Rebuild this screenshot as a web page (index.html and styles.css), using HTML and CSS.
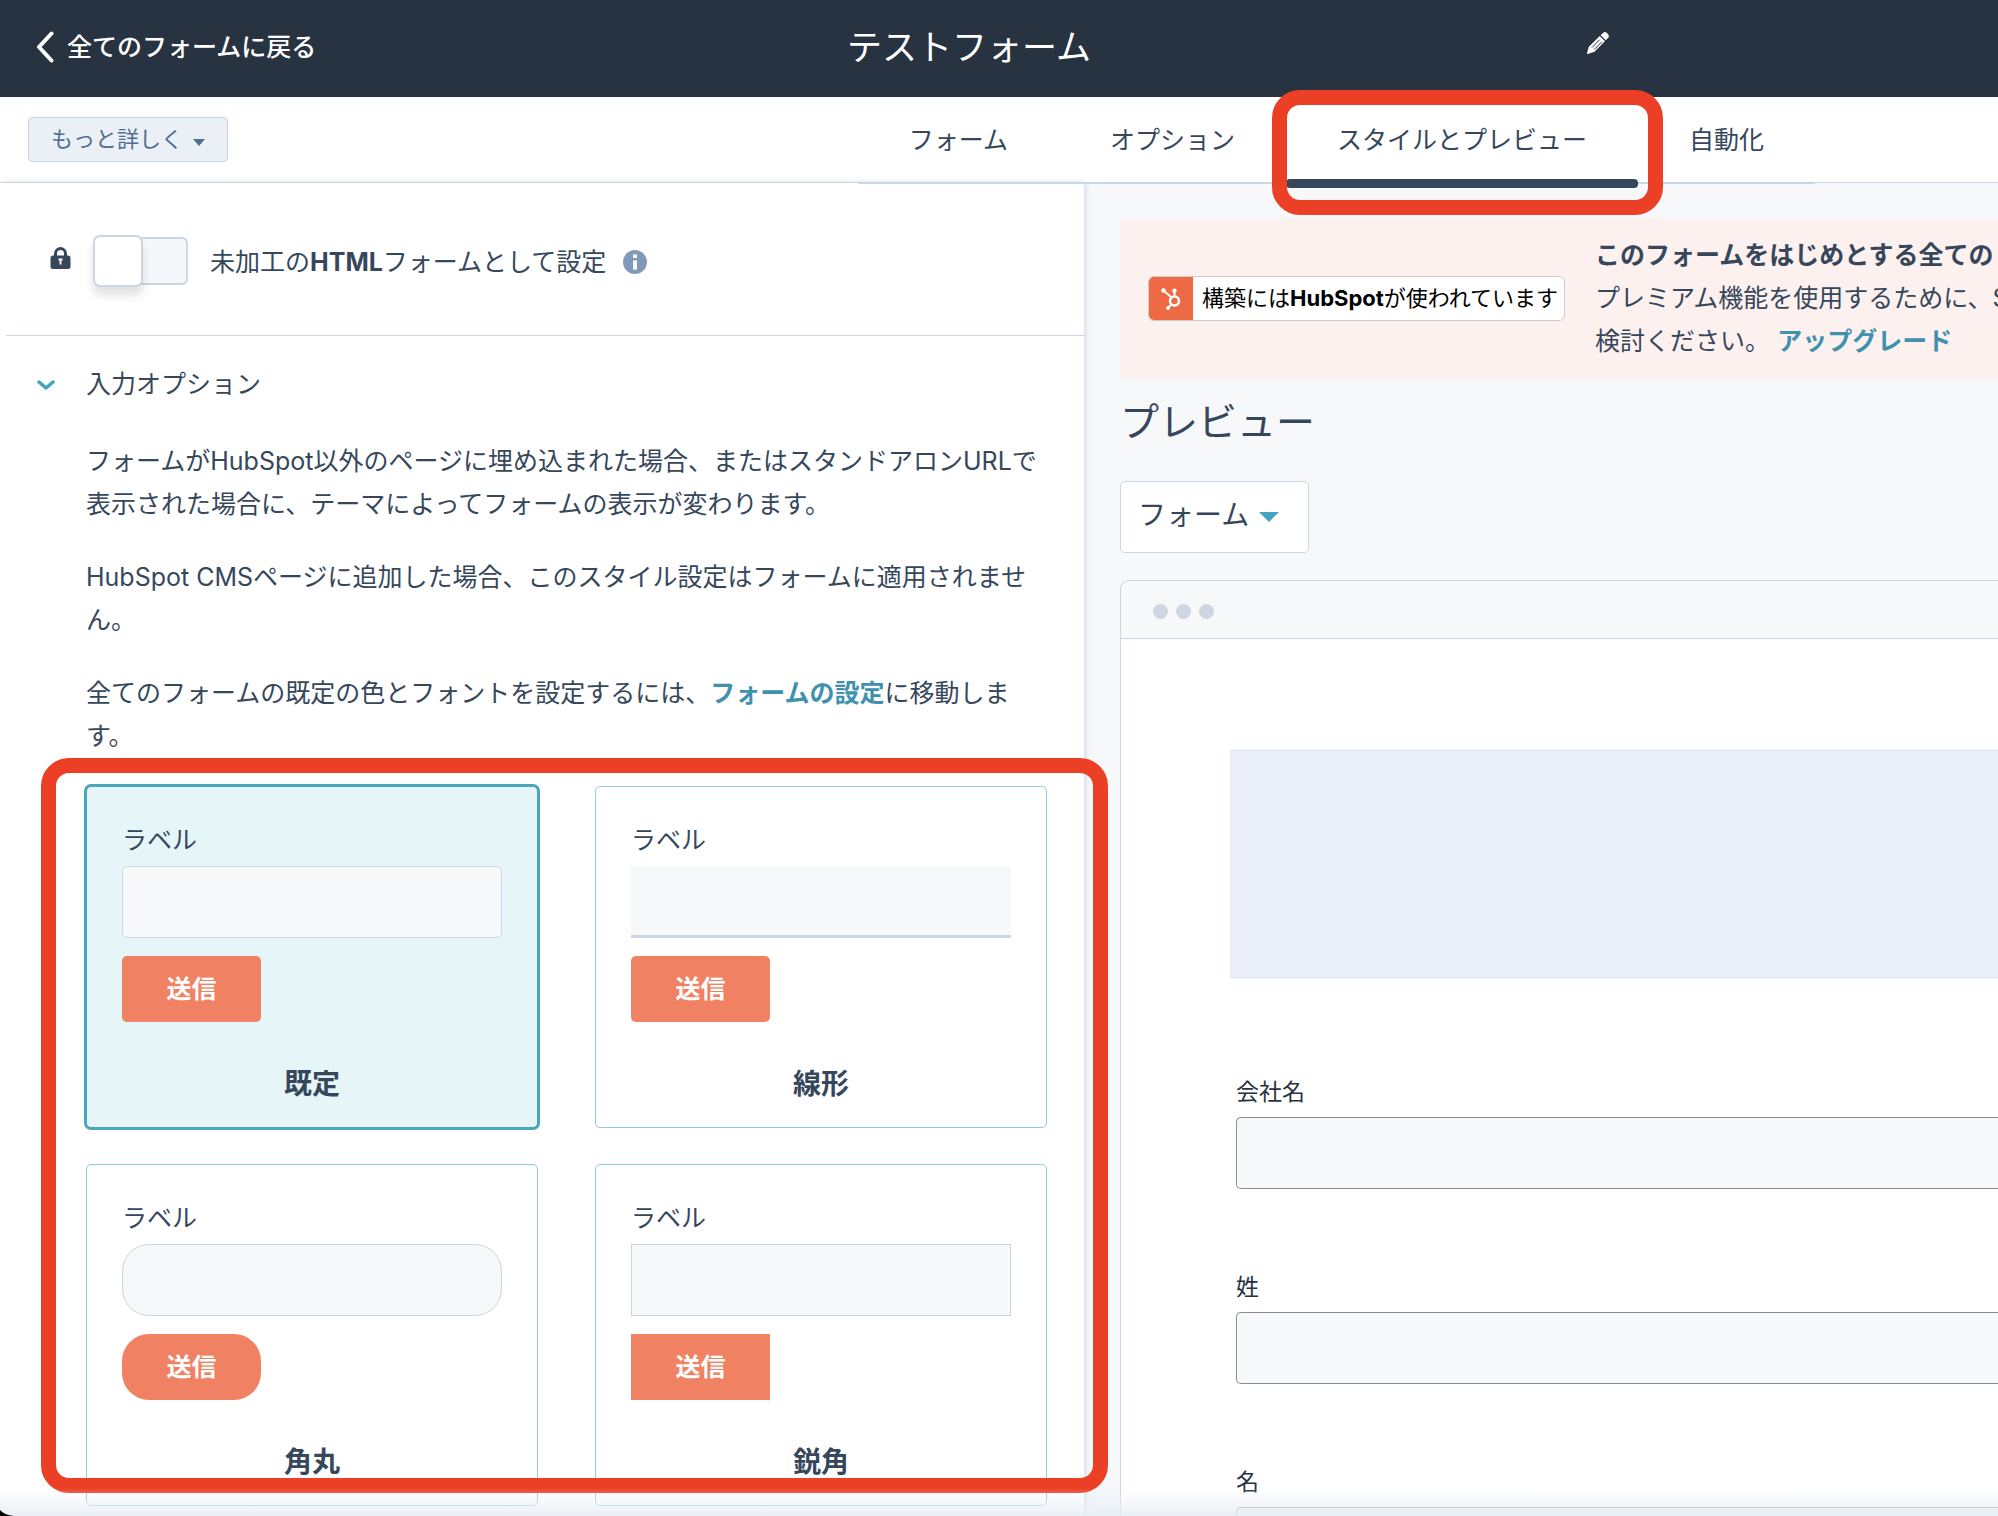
FILE: index.html
```html
<!DOCTYPE html>
<html lang="ja">
<head>
<meta charset="utf-8">
<meta name="viewport" content="width=device-width, initial-scale=1">
<title>テストフォーム</title>
<link rel="stylesheet" href="styles.css">
</head>
<body>
<div class="app">
  <header class="topbar">
    <a class="back" href="#">
      <svg class="back-icon" viewBox="0 0 18 32" aria-hidden="true"><path d="M15.5 2.5 3 16l12.500 13.500" fill="none" stroke="currentColor" stroke-width="4" stroke-linecap="round" stroke-linejoin="round"/></svg>
      <span>全てのフォームに戻る</span>
    </a>
    <div class="title-edit">
      <h1 class="title">テストフォーム</h1>
      <button class="edit" type="button" aria-label="名前を編集">
        <svg viewBox="0 0 22 22" aria-hidden="true">
          <path d="M13.500 3.200 16 .9Q18-.8 20 1L21 2.200Q22.800 4.200 21 6L18.800 8.200Z" fill="currentColor"/>
          <path d="M12.800 3.900 18.100 8.900 7.500 19.800.8 21.900Q0 22 0 21.300L1.800 14.800Z" fill="currentColor"/>
          <path d="M13 3.700 18.400 8.800M5 15.500 12.600 7.700M7.200 17.500 14.800 9.800" stroke="#273341" stroke-width="1"/>
        </svg>
      </button>
    </div>
  </header>

  <div class="subbar">
    <button class="more" type="button">もっと詳しく
      <svg viewBox="0 0 12 7" aria-hidden="true"><path d="M0 0h12L6 7z" fill="currentColor"/></svg>
    </button>
    <nav class="tabs">
      <a class="tab" href="#">フォーム</a>
      <a class="tab" href="#">オプション</a>
      <a class="tab tab-active" href="#" aria-current="page">スタイルとプレビュー<span class="mark mark-tab"></span></a>
      <a class="tab" href="#">自動化</a>
    </nav>
  </div>

  <main class="main">
    <section class="settings">
      <div class="raw">
        <svg class="lock" viewBox="0 0 20 22" aria-hidden="true">
          <path d="M5 10V6.500a5 5 0 0 1 10 0V10" fill="none" stroke="currentColor" stroke-width="3"/>
          <rect y="8.500" width="20" height="13.500" rx="2.500" fill="currentColor"/>
          <path d="M8 12.500h4M10 12.500v5" stroke="#fff" stroke-width="1.800"/>
        </svg>
        <input class="toggle" type="checkbox" id="raw-html">
        <label for="raw-html">未加工の<b>HTML</b>フォームとして設定</label>
        <svg class="info" viewBox="0 0 24 24" role="img" aria-label="情報"><circle cx="12" cy="12" r="12" fill="#8199b9"/><path d="M10 4.500h4v3.500h-4zM10 10.500h4v9h-4z" fill="#fff"/></svg>
      </div>

      <div class="options">
        <h2 class="options-head">
          <svg viewBox="0 0 18 10" aria-hidden="true"><path d="M2 2l7 6 7-6" fill="none" stroke="#46a3bd" stroke-width="3.500" stroke-linecap="round" stroke-linejoin="round"/></svg>
          <span>入力オプション</span>
        </h2>
        <div class="options-body">
          <p>フォームがHubSpot以外のページに埋め込まれた場合、またはスタンドアロンURLで表示された場合に、テーマによってフォームの表示が変わります。</p>
          <p>HubSpot CMSページに追加した場合、このスタイル設定はフォームに適用されません。</p>
          <p>全てのフォームの既定の色とフォントを設定するには、<a class="link" href="#">フォームの設定</a>に移動します。</p>

          <div class="cards">
            <div class="card card-selected">
              <label for="s1">ラベル</label>
              <input class="sample" id="s1" type="text">
              <button class="send" type="button">送信</button>
              <h3>既定</h3>
            </div>
            <div class="card card-linear">
              <label for="s2">ラベル</label>
              <input class="sample" id="s2" type="text">
              <button class="send" type="button">送信</button>
              <h3>線形</h3>
            </div>
            <div class="card card-round">
              <label for="s3">ラベル</label>
              <input class="sample" id="s3" type="text">
              <button class="send" type="button">送信</button>
              <h3>角丸</h3>
            </div>
            <div class="card card-sharp">
              <label for="s4">ラベル</label>
              <input class="sample" id="s4" type="text">
              <button class="send" type="button">送信</button>
              <h3>鋭角</h3>
            </div>
            <span class="mark mark-cards"></span>
          </div>
        </div>
      </div>
    </section>

    <section class="preview">
      <div class="banner">
        <div class="badge">
          <span class="badge-logo">
            <svg viewBox="0 0 20 22" aria-hidden="true">
              <g fill="none" stroke="#fff" stroke-width="2"><circle cx="13.500" cy="13" r="4.500" stroke-width="2.600"/><path d="M13.500 8.500V3M10.500 9.500 2.500 2.500M10.300 16.500 7 20"/></g>
              <g fill="#fff"><circle cx="2.500" cy="2.500" r="2.300"/><circle cx="13.500" cy="2.800" r="2.200"/><circle cx="7" cy="20" r="1.900"/></g>
            </svg>
          </span>
          <span class="badge-text">構築には<b>HubSpot</b>が使われています</span>
        </div>
        <p class="banner-text"><b>このフォームをはじめとする全ての</b><br>プレミアム機能を使用するために、S<br>検討ください。 <a class="link" href="#">アップグレード</a></p>
      </div>

      <h2 class="preview-title">プレビュー</h2>
      <div class="picker">
        <select aria-label="プレビューの対象"><option>フォーム</option></select>
        <svg viewBox="0 0 20 10" aria-hidden="true"><path d="M0 0h20L10 10z" fill="#46a3bd"/></svg>
      </div>

      <div class="frame">
        <div class="frame-bar"><i></i><i></i><i></i></div>
        <div class="frame-body">
          <div class="placeholder"></div>
          <form class="form">
            <div class="field"><label for="company">会社名</label><input id="company" type="text"></div>
            <div class="field"><label for="last">姓</label><input id="last" type="text"></div>
            <div class="field"><label for="first">名</label><input id="first" type="text"></div>
          </form>
        </div>
      </div>
    </section>
  </main>
  <div class="fade"></div>
  <svg class="corner" viewBox="0 0 14 6" aria-hidden="true"><path d="M0 0Q4 5 14 6H0Z"/></svg>
</div>
</body>
</html>
```
FILE: styles.css
```css
*, ::before, ::after { box-sizing: border-box; }

body {
  margin: 0;
  font-family: Inter, "Noto Sans CJK JP", sans-serif;
  font-size: 25px;
  line-height: 43px;
  color: #36475b;
  background: #fff;
}

h1, h2, h3, p { margin: 0; font-weight: 400; }
a { color: inherit; text-decoration: none; }
button, input, select { font: inherit; color: inherit; margin: 0; }
svg { display: block; flex: none; }
.link { color: #3f91ae; font-weight: 700; }

.app {
  position: relative;
  display: flex;
  flex-direction: column;
  height: 100vh;
  overflow: hidden;
}

/* Top bar */
.topbar {
  display: grid;
  grid-template-columns: 847fr 762fr 389fr;
  align-items: center;
  flex: none;
  height: 97px;
  padding-bottom: 3px;
  background: #273341;
  color: #fff;
}
.back { display: flex; align-items: center; gap: 13px; padding-left: 36px; font-weight: 500; }
.back-icon { width: 18px; height: 32px; }
.title-edit { display: flex; align-items: center; justify-content: space-between; }
.title { font-size: 35px; }
.edit { padding: 0 0 8px; border: 0; background: none; color: #fff; }
.edit svg { width: 22px; height: 22px; }

/* Tab bar */
.subbar {
  position: relative;
  z-index: 3;
  display: flex;
  align-items: center;
  justify-content: space-between;
  flex: none;
  height: 86px;
  padding: 0 183px 0 28px;
  border-bottom: 1px solid #cbd6e2;
}
.more {
  display: flex;
  align-items: center;
  gap: 10px;
  height: 45px;
  padding: 0 22px;
  border: 1px solid #cbd6e2;
  border-radius: 4px;
  background: #eaf0f6;
  color: #506e91;
  font-size: 22px;
}
.more svg { width: 12px; height: 7px; margin-top: 6px; }
.tabs { display: flex; align-self: flex-start; height: 87px; border-bottom: 2px solid #cbd6e2; }
.tab { position: relative; padding: 22px 51px 20px; }
.tab-active::after {
  content: "";
  position: absolute;
  left: 0;
  right: 0;
  bottom: -6px;
  height: 9px;
  border-radius: 4px;
  background: #36475b;
}

/* Red highlight frames */
.mark { position: absolute; z-index: 4; border: 15px solid #ec4026; border-radius: 28px; pointer-events: none; }
.mark-tab { inset: -7px -25px -33px -14px; }
.mark-cards { inset: -28px -61px 13px -45px; }

.main { display: grid; grid-template-columns: 1084fr 914fr; flex: 1; min-height: 0; }

/* Settings panel */
.settings { position: relative; z-index: 2; min-width: 0; background: #fff; box-shadow: 1px 0 6px #cbd6e2; }
.raw {
  display: flex;
  align-items: center;
  height: 153px;
  margin-left: 6px;
  padding: 6px 0 0 44px;
  border-bottom: 1px solid #cbd6e2;
}
.lock { width: 21px; height: 22px; margin-right: 23px; margin-bottom: 8px; }
.toggle {
  appearance: none;
  position: relative;
  width: 94px;
  height: 48px;
  margin-right: 22px;
  margin-bottom: 2px;
  border: 2px solid #cbd6e2;
  border-radius: 6px;
  background: #f5f8fa;
}
.toggle::before {
  content: "";
  position: absolute;
  top: -4px;
  left: -3px;
  width: 50px;
  height: 52px;
  border: 2px solid #cbd6e2;
  border-radius: 7px;
  background: #fff;
  box-shadow: 0 8px 10px rgba(0, 0, 0, .12);
}
.info { width: 24px; height: 24px; margin-left: 17px; }

.options-head { display: flex; align-items: center; gap: 31px; padding: 27px 0 0 37px; font-size: 25px; }
.options-head svg { width: 18px; height: 10px; }
.options-body { display: flex; flex-direction: column; gap: 30px; padding: 34px 37px 0 86px; }

.cards { position: relative; display: grid; grid-template-columns: 1fr 1fr; gap: 36px 57px; margin-top: -2px; }
.card {
  display: flex;
  flex-direction: column;
  align-items: flex-start;
  height: 342px;
  padding: 32px 35px 0;
  border: 1px solid #8fcfda;
  border-radius: 5px;
}
.card-selected { border-color: #4aa5bd; background: #e5f5f8; box-shadow: 0 0 0 2px #4aa5bd; }
.sample { width: 100%; height: 72px; margin: 4px 0 18px; border: 1px solid #cbd6e2; border-radius: 5px; background: #f6f8fa; }
.send { width: 139px; height: 66px; padding: 0; border: 0; border-radius: 5px; background: #f08263; color: #fff; font-weight: 700; }
.card h3 { align-self: center; margin-top: 41px; font-size: 28px; font-weight: 700; }
.card-linear .sample { border-width: 0 0 3px; border-radius: 0; }
.card-round .sample, .card-round .send { border-radius: 27px; }
.card-sharp .sample, .card-sharp .send { border-radius: 0; }

/* Preview pane */
.preview { min-width: 0; padding: 36px 0 0 36px; background: #f6f8fa; overflow: hidden; }
.banner { display: flex; align-items: center; gap: 30px; height: 159px; padding-left: 28px; background: #fdf1ef; white-space: nowrap; }
.badge { display: flex; flex: none; height: 45px; border: 1px solid #cbcbcb; border-radius: 6px; background: #fff; color: #000; font-size: 22px; overflow: hidden; }
.badge-logo { display: grid; place-items: center; width: 44px; background: #ed6a45; }
.badge-logo svg { width: 20px; height: 22px; }
.badge-text { padding: 0 6px 0 9px; }
.preview-title { margin-top: 22px; font-size: 39px; }
.picker { display: grid; align-items: center; width: 189px; margin: 38px 0 27px; }
.picker select {
  grid-area: 1 / 1;
  appearance: none;
  height: 72px;
  padding: 0 17px 3px;
  border: 1px solid #cbd6e2;
  border-radius: 5px;
  background: #fff;
  font-size: 28px;
}
.picker svg { grid-area: 1 / 1; justify-self: end; width: 20px; height: 10px; margin-right: 30px; pointer-events: none; }

.frame { border: 1px solid #cbd6e2; border-right: 0; border-radius: 9px 0 0; overflow: hidden; }
.frame-bar { display: flex; align-items: center; gap: 8px; height: 58px; padding: 4px 0 0 32px; border-bottom: 1px solid #cbd6e2; }
.frame-bar i { width: 15px; height: 15px; border-radius: 50%; background: #cfd6e3; }
.frame-body { padding: 110px 0 0 109px; background: #fff; }
.placeholder { height: 230px; background: #eaeef6; }
.form { padding: 96px 0 0 6px; }
.field { display: flex; flex-direction: column; gap: 7px; height: 195px; color: #273341; font-size: 23px; line-height: 35px; }
.field input { height: 72px; border: 1px solid #8a8d91; border-right: 0; border-radius: 5px 0 0 5px; background: #f6f8fa; }

/* Window edge */
.fade { position: absolute; z-index: 3; inset: auto 0 0; height: 28px; background: linear-gradient(rgba(233, 238, 245, 0), rgba(233, 238, 245, .9)); }
.corner { position: absolute; z-index: 4; left: 0; bottom: 0; width: 14px; height: 6px; }
```
